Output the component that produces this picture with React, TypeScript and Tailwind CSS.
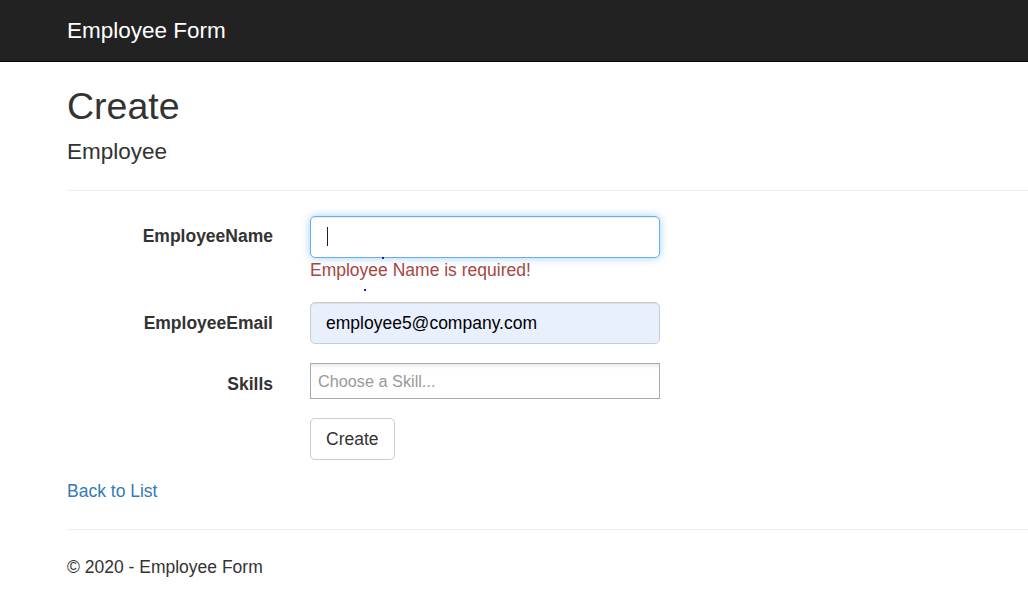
import { useState } from "react";

type FieldRowProps = {
  label: string;
  children: React.ReactNode;
};

const FieldRow = ({ label, children }: FieldRowProps) => (
  <div className="flex mb-[18.75px]">
    <label className="w-[206px] shrink-0 text-right pt-[8.75px] font-bold text-[17.5px] leading-[25px] text-[#333]">
      {label}
    </label>
    <div className="ml-[37px] w-[350px] relative">{children}</div>
  </div>
);

const App = () => {
  const [email, setEmail] = useState("employee5@company.com");

  return (
    <div className="min-h-screen bg-white text-[#333] text-[17.5px] leading-[25px] font-['Liberation_Sans',Arial,sans-serif]">
      <header className="h-[62px] bg-[#222] border-b border-[#080808] flex items-center pl-[67px]">
        <span className="text-white text-[22.5px] leading-[25px]">Employee Form</span>
      </header>

      <main className="pl-[67px] pt-[24px]">
        <h2 className="text-[37.5px] leading-[1.1] font-normal">Create</h2>
        <h4 className="mt-[12.5px] text-[22.5px] leading-[1.1]">Employee</h4>
        <hr className="mt-[25px] border-t border-[#eee]" />

        <form className="mt-[25px]" onSubmit={(e) => e.preventDefault()}>
          <FieldRow label="EmployeeName">
            <div className="h-[42.5px] rounded-[5px] border border-[#66afe9] bg-white shadow-[inset_0_1px_1px_rgba(0,0,0,0.075),0_0_8px_rgba(102,175,233,0.6)] flex items-center pl-[16px]">
              <span className="w-px h-[19px] bg-[#222]" />
            </div>
            <span className="absolute left-[72px] top-[41px] w-[2px] h-[2px] bg-[#1515ff]" />
            <div className="text-[#a94442]">Employee Name is required!</div>
            <span className="absolute left-[54px] top-[73px] w-[2px] h-[2px] bg-[#1515ff]" />
          </FieldRow>

          <FieldRow label="EmployeeEmail">
            <input
              value={email}
              onChange={(e) => setEmail(e.target.value)}
              className="w-full h-[42.5px] rounded-[5px] border border-[#ccc] bg-[#e8f0fe] px-[15px] text-black text-[17.5px] outline-none shadow-[inset_0_1px_1px_rgba(0,0,0,0.075)]"
            />
          </FieldRow>

          <FieldRow label="Skills">
            <div className="h-[36px] border border-[#aaa] bg-[linear-gradient(#eee_1%,#fff_15%)] flex items-center pl-[7px] text-[16.25px] text-[#999]">
              Choose a Skill...
            </div>
          </FieldRow>

          <div className="flex mb-[18.75px]">
            <div className="w-[206px] shrink-0" />
            <div className="ml-[37px]">
              <button
                type="submit"
                className="h-[42.5px] px-[15px] rounded-[5px] border border-[#ccc] bg-white text-[#333] text-[17.5px]"
              >
                Create
              </button>
            </div>
          </div>
        </form>

        <div>
          <a href="#" className="text-[#337ab7]">
            Back to List
          </a>
        </div>

        <hr className="mt-[25px] border-t border-[#eee]" />
        <footer className="mt-[25px]">
          <p>© 2020 - Employee Form</p>
        </footer>
      </main>
    </div>
  );
};

export default App;
